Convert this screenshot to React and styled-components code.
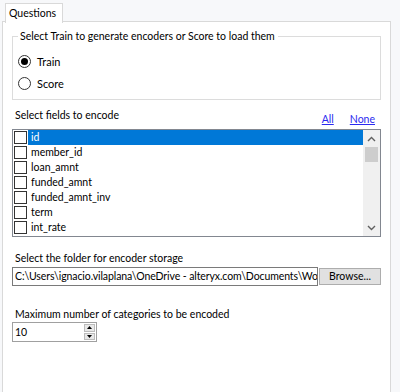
import React from "react";
import styled, { createGlobalStyle } from "styled-components";

const Global = createGlobalStyle`
  html, body { margin: 0; padding: 0; background: #f7f8fa; }
  body { font-family: "Lato", "Noto Sans", sans-serif; font-size: 10.5px; color: #000; }
  * { box-sizing: border-box; }
`;

const Page = styled.div`
  width: 400px;
  height: 392px;
  padding: 3px 9px 0 2px;
  display: flex;
  flex-direction: column;
  overflow: hidden;
`;

const TabStrip = styled.div`
  display: flex;
  padding-left: 3px;
  height: 19px;
  margin-bottom: -1px;
  position: relative;
  z-index: 1;
`;

const Tab = styled.div`
  width: 58px;
  height: 20px;
  background: #fff;
  border: 1px solid #d9d9d9;
  border-bottom: none;
  padding: 1px 0 0 3px;
  line-height: 16px;
`;

const Panel = styled.div`
  flex: 1;
  background: #fff;
  border: 1px solid #d9d9d9;
  border-bottom: none;
  padding: 6px 9px 0 9px;
  display: flex;
  flex-direction: column;
`;

const Group = styled.fieldset`
  margin: 0;
  padding: 9px 0 0 5px;
  border: 1px solid #dcdcdc;
  height: 72px;
  display: flex;
  flex-direction: column;
  gap: 6px;
`;

const Legend = styled.legend`
  margin-left: 0;
  padding: 0 3px 0 2px;
  line-height: 16px;
`;

const RadioRow = styled.label`
  display: flex;
  align-items: center;
  gap: 6px;
  height: 16px;
  font-size: 11px;
`;

const RadioCircle = styled.span`
  width: 13px;
  height: 13px;
  border-radius: 50%;
  border: 1px solid #333;
  background: #fff;
  display: flex;
  align-items: center;
  justify-content: center;
  &::after {
    content: "";
    width: 7px;
    height: 7px;
    border-radius: 50%;
    background: ${(p) => (p.$checked ? "#000" : "transparent")};
  }
`;

const FieldsHeader = styled.div`
  display: flex;
  align-items: flex-end;
  margin-top: 7px;
  padding-left: 3px;
  height: 22px;
`;

const Label = styled.div`
  line-height: 16px;
  padding-left: 3px;
`;

const HeaderLabel = styled.div`
  flex: 1;
  line-height: 16px;
  margin-bottom: 6px;
`;

const Link = styled.a`
  color: #2a2af0;
  text-decoration: underline;
  line-height: 16px;
  margin-right: ${(p) => p.$mr || 0}px;
  margin-bottom: 2px;
`;

const ListBox = styled.div`
  height: 108px;
  border: 1px solid #828790;
  display: flex;
`;

const Rows = styled.div`
  flex: 1;
`;

const Row = styled.div`
  display: flex;
  align-items: center;
  height: 15px;
  padding-left: 1px;
`;

const Check = styled.span`
  width: 13px;
  height: 13px;
  border: 1px solid #333;
  background: #fff;
  flex: none;
`;

const RowText = styled.span`
  flex: 1;
  height: 15px;
  line-height: 15px;
  margin-left: 1px;
  padding-left: 3px;
  background: ${(p) => (p.$selected ? "#0078d7" : "transparent")};
  color: ${(p) => (p.$selected ? "#fff" : "#000")};
`;

const ScrollBar = styled.div`
  width: 17px;
  background: #f0f0f0;
  display: flex;
  flex-direction: column;
  align-items: center;
`;

const ScrollBtn = styled.div`
  width: 17px;
  height: 17px;
  display: flex;
  align-items: center;
  justify-content: center;
`;

const Track = styled.div`
  flex: 1;
  width: 100%;
  padding: 0 2px;
`;

const Thumb = styled.div`
  height: 15px;
  background: #cdcdcd;
`;

const FolderLabel = styled(Label)`
  margin-top: 13px;
`;

const PathRow = styled.div`
  display: flex;
  align-items: center;
  gap: 1px;
  margin-top: 1px;
`;

const PathInput = styled.div`
  width: 306px;
  height: 19px;
  border: 1px solid #7a7a7a;
  line-height: 17px;
  padding-left: 2px;
  letter-spacing: -0.09px;
  white-space: nowrap;
  overflow: hidden;
`;

const Button = styled.div`
  width: 62px;
  height: 17px;
  background: #e1e1e1;
  border: 1px solid #adadad;
  text-align: center;
  line-height: 15px;
`;

const MaxLabel = styled(Label)`
  margin-top: 20px;
`;

const NumBox = styled.div`
  width: 85px;
  height: 20px;
  border: 1px solid #a0a0a0;
  display: flex;
`;

const NumText = styled.div`
  flex: 1;
  line-height: 18px;
  padding-left: 2px;
`;

const Spin = styled.div`
  width: 12px;
  display: flex;
  flex-direction: column;
  gap: 1px;
  padding: 1px 1px 1px 0;
`;

const SpinBtn = styled.div`
  flex: 1;
  background: #e8e8e8;
  border: 1px solid #bcbcbc;
  display: flex;
  align-items: center;
  justify-content: center;
`;

const Chevron = ({ up }) => (
  <svg width="9" height="6" viewBox="0 0 9 6">
    <path d={up ? "M1 5 L4.5 1.5 L8 5" : "M1 1 L4.5 4.5 L8 1"} fill="none" stroke="#606060" strokeWidth="1.4" />
  </svg>
);

const Tri = ({ up }) => (
  <svg width="5" height="3" viewBox="0 0 5 3">
    <path d={up ? "M0 3 L2.5 0 L5 3 Z" : "M0 0 L2.5 3 L5 0 Z"} fill="#000" />
  </svg>
);

const fields = ["id", "member_id", "loan_amnt", "funded_amnt", "funded_amnt_inv", "term", "int_rate"];

export default function App() {
  return (
    <>
      <Global />
      <Page>
        <TabStrip>
          <Tab>Questions</Tab>
        </TabStrip>
        <Panel>
          <Group>
            <Legend>Select Train to generate encoders or Score to load them</Legend>
            <RadioRow>
              <RadioCircle $checked />
              Train
            </RadioRow>
            <RadioRow>
              <RadioCircle />
              Score
            </RadioRow>
          </Group>
          <FieldsHeader>
            <HeaderLabel>Select fields to encode</HeaderLabel>
            <Link $mr={16}>All</Link>
            <Link $mr={6}>None</Link>
          </FieldsHeader>
          <ListBox>
            <Rows>
              {fields.map((f, i) => (
                <Row key={f}>
                  <Check />
                  <RowText $selected={i === 0}>{f}</RowText>
                </Row>
              ))}
            </Rows>
            <ScrollBar>
              <ScrollBtn><Chevron up /></ScrollBtn>
              <Track><Thumb /></Track>
              <ScrollBtn><Chevron /></ScrollBtn>
            </ScrollBar>
          </ListBox>
          <FolderLabel>Select the folder for encoder storage</FolderLabel>
          <PathRow>
            <PathInput>C:\Users\ignacio.vilaplana\OneDrive - alteryx.com\Documents\Wo</PathInput>
            <Button>Browse...</Button>
          </PathRow>
          <MaxLabel>Maximum number of categories to be encoded</MaxLabel>
          <NumBox>
            <NumText>10</NumText>
            <Spin>
              <SpinBtn><Tri up /></SpinBtn>
              <SpinBtn><Tri /></SpinBtn>
            </Spin>
          </NumBox>
        </Panel>
      </Page>
    </>
  );
}
